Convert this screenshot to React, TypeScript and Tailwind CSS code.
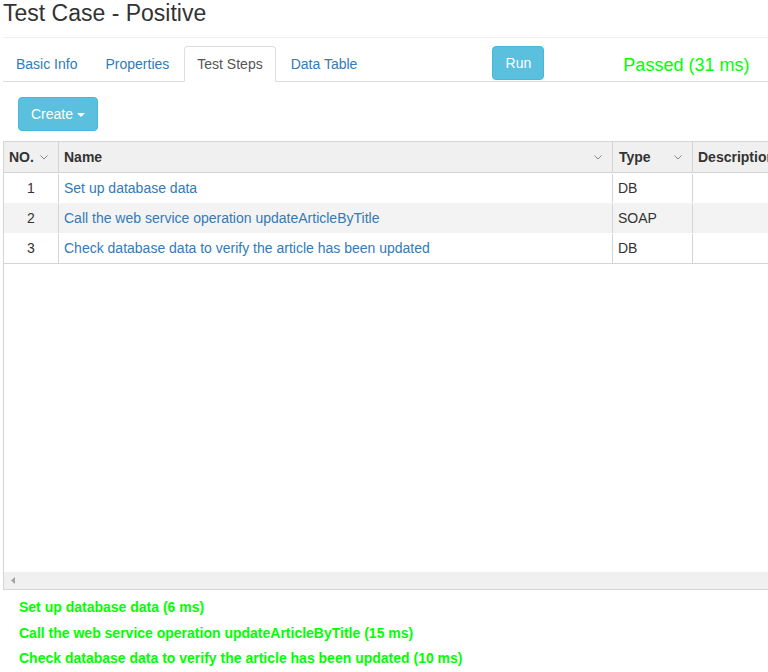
const steps = [
  { no: 1, name: 'Set up database data', type: 'DB', ms: 6 },
  { no: 2, name: 'Call the web service operation updateArticleByTitle', type: 'SOAP', ms: 15 },
  { no: 3, name: 'Check database data to verify the article has been updated', type: 'DB', ms: 10 }
];

const tabs = ['Basic Info', 'Properties', 'Test Steps', 'Data Table'];

function Chevron() {
  return (
    <svg width="8" height="5" viewBox="0 0 8 5" className="shrink-0">
      <path d="M0.5 0.5 L4 4 L7.5 0.5" fill="none" stroke="#888" strokeWidth="1" />
    </svg>
  );
}

function Caret() {
  return (
    <svg width="8" height="4" viewBox="0 0 8 4" className="ml-[4px] mt-[2px]">
      <path d="M0 0 L8 0 L4 4 Z" fill="#fff" />
    </svg>
  );
}

export default function App() {
  return (
    <div className="h-[672px] w-[768px] overflow-hidden bg-white pl-[3px] font-['Liberation_Sans',Arial,sans-serif] text-[#333]">
      <h3 className="m-0 text-[23px] leading-[26px] font-normal">Test Case - Positive</h3>
      <div className="mt-[11px] border-t border-[#eee]" />

      <div className="mt-[8px] flex items-start border-b border-[#ddd] text-[14px]">
        {tabs.map((tab) => {
          const active = tab === 'Test Steps';
          return (
            <div
              key={tab}
              className={
                active
                  ? '-mb-px mr-[2px] flex h-[36px] items-center rounded-t-[4px] border border-[#ddd] border-b-white bg-white px-[12px] text-[#555]'
                  : '-mb-px mr-[2px] flex h-[36px] items-center border border-transparent px-[12px] text-[#337ab7]'
              }
            >
              {tab}
            </div>
          );
        })}
        <button className="ml-[120px] flex h-[34px] w-[52px] items-center justify-center rounded-[4px] border border-[#46b8da] bg-[#5bc0de] text-[14px] text-white">
          Run
        </button>
        <div className="ml-[79px] mt-[8px] text-[18px] leading-[22px] text-[#00ff00]">Passed (31 ms)</div>
      </div>

      <button className="ml-[15px] mt-[15px] flex h-[34px] w-[80px] items-center justify-center rounded-[4px] border border-[#46b8da] bg-[#5bc0de] text-[14px] text-white">
        Create
        <Caret />
      </button>

      <div className="mt-[10px] w-[900px] border border-[#d4d4d4] text-[14px]">
        <div className="grid h-[31px] grid-cols-[55px_554px_80px_1fr] border-b border-[#d4d4d4] bg-[#f0f0f0] font-bold">
          <div className="flex items-center justify-between border-r border-[#d4d4d4] pl-[5px] pr-[10px]">
            <span>NO.</span>
            <Chevron />
          </div>
          <div className="flex items-center justify-between border-r border-[#d4d4d4] pl-[5px] pr-[10px]">
            <span>Name</span>
            <Chevron />
          </div>
          <div className="flex items-center justify-between border-r border-[#d4d4d4] pl-[6px] pr-[10px]">
            <span>Type</span>
            <Chevron />
          </div>
          <div className="flex items-center pl-[5px]">
            <span>Description</span>
          </div>
        </div>

        {steps.map((s, i) => (
          <div
            key={s.no}
            className={
              i % 2 === 1
                ? 'grid h-[30px] grid-cols-[55px_554px_80px_1fr] bg-[#f3f3f3] pt-px'
                : 'grid h-[30px] grid-cols-[55px_554px_80px_1fr] bg-white pt-px'
            }
          >
            <div className="flex items-center justify-center border-r border-[#d4d4d4]">{s.no}</div>
            <div className="flex items-center border-r border-[#d4d4d4] pl-[5px] text-[#337ab7]">{s.name}</div>
            <div className="flex items-center border-r border-[#d4d4d4] pl-[5px]">{s.type}</div>
            <div />
          </div>
        ))}
        <div className="h-[309px] border-t border-[#d4d4d4]" />
        <div className="flex h-[17px] items-center bg-[#f0f0f0] pl-[7px]">
          <svg width="4" height="7" viewBox="0 0 4 7">
            <path d="M4 0 L0 3.5 L4 7 Z" fill="#a3a3a3" />
          </svg>
        </div>
      </div>

      <div className="mt-[5px] pl-[16px] text-[14px] leading-[25.5px] font-bold text-[#00ff00]">
        {steps.map((s) => (
          <div key={s.no}>
            {s.name} ({s.ms} ms)
          </div>
        ))}
      </div>
    </div>
  );
}
